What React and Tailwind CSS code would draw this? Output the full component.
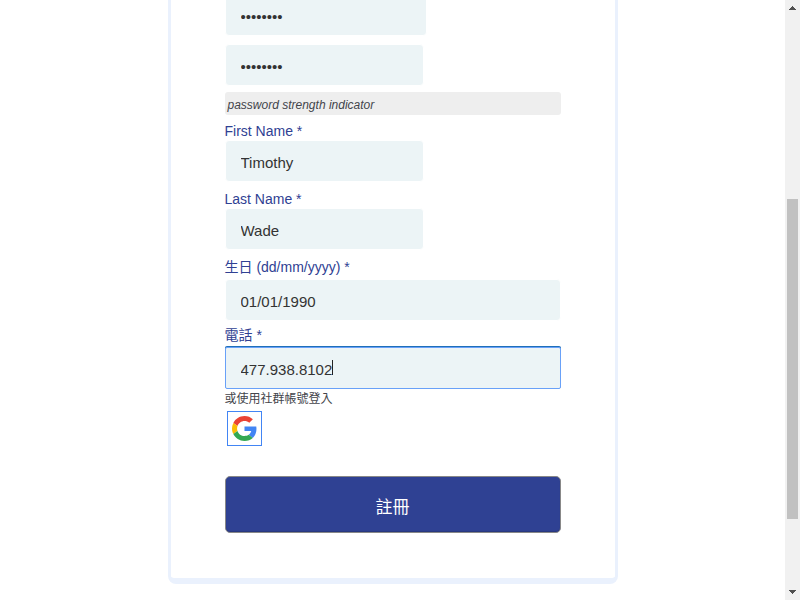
const fieldBase =
  "block h-[42px] rounded-[4px] border border-white bg-[#ecf4f6] px-[15px] pt-[2px] text-[15px] text-[#333333] outline-none";
const labelBase = "block h-[18px] text-sm leading-[18px] text-[#2f4193]";

function GoogleLogo() {
  return (
    <svg viewBox="0 0 48 48" className="size-[25px]" aria-hidden="true">
      <path fill="#EA4335" d="M24 9.5c3.54 0 6.71 1.22 9.21 3.6l6.85-6.85C35.9 2.38 30.47 0 24 0 14.62 0 6.51 5.38 2.56 13.22l7.98 6.19C12.43 13.72 17.74 9.5 24 9.5z" />
      <path fill="#4285F4" d="M46.98 24.55c0-1.57-.15-3.09-.38-4.55H24v9.02h12.94c-.58 2.96-2.26 5.48-4.78 7.18l7.73 6c4.51-4.18 7.09-10.36 7.09-17.65z" />
      <path fill="#FBBC05" d="M10.53 28.59c-.48-1.45-.76-2.99-.76-4.59s.27-3.14.76-4.59l-7.98-6.19C.92 16.46 0 20.12 0 24c0 3.88.92 7.54 2.56 10.78l7.97-6.19z" />
      <path fill="#34A853" d="M24 48c6.48 0 11.93-2.13 15.89-5.81l-7.73-6c-2.15 1.45-4.92 2.3-8.16 2.3-6.26 0-11.57-4.22-13.47-9.91l-7.98 6.19C6.51 42.62 14.62 48 24 48z" />
    </svg>
  );
}

function Scrollbar() {
  return (
    <div className="flex w-[15px] shrink-0 flex-col items-center justify-between bg-[#f1f1f1]" aria-hidden="true">
      <svg viewBox="0 0 15 15" className="size-[15px]" shapeRendering="crispEdges">
        <path d="M4 10h7v-1h-1v-1h-1v-1h-1v-1h-1v1h-1v1h-1v1h-1z" fill="#505050" />
      </svg>
      <div className="flex w-[11px] flex-1 flex-col">
        <div className="grow-[184]" />
        <div className="grow-[320] bg-[#c1c1c1]" />
        <div className="grow-[66]" />
      </div>
      <svg viewBox="0 0 15 15" className="size-[15px]" shapeRendering="crispEdges">
        <path d="M4 5h7v1h-1v1h-1v1h-1v1h-1v-1h-1v-1h-1v-1h-1z" fill="#505050" />
      </svg>
    </div>
  );
}

export default function App() {
  return (
    <div className="flex h-screen overflow-hidden bg-white font-['Liberation_Sans','Noto_Sans_CJK_TC',sans-serif]">
      <main className="min-w-0 flex-1 overflow-hidden">
        <form
          className="mx-auto -mt-[6px] w-full max-w-[450px] rounded-b-lg border-x-[3px] border-b-[6px] border-[#eaf1fd] px-[54px] pb-[45px]"
          onSubmit={(e) => e.preventDefault()}
        >
          <input type="password" aria-label="Password" defaultValue="password" className={`${fieldBase} w-[202px]`} />
          <input type="password" aria-label="Confirm password" defaultValue="password" className={`${fieldBase} mt-2 w-[199px]`} />
          <div className="mt-[6px] h-[23px] rounded-[3px] bg-[#eeeeee] px-[3px] pt-[2px] text-xs leading-[23px] text-[#43454b] italic">
            password strength indicator
          </div>

          <label htmlFor="first" className={`${labelBase} mt-[7px]`}>First Name *</label>
          <input id="first" type="text" defaultValue="Timothy" className={`${fieldBase} w-[199px]`} />

          <label htmlFor="last" className={`${labelBase} mt-2`}>Last Name *</label>
          <input id="last" type="text" defaultValue="Wade" className={`${fieldBase} w-[199px]`} />

          <label htmlFor="birthday" className={`${labelBase} mt-2 mb-[3px]`}>生日 (dd/mm/yyyy) *</label>
          <input id="birthday" type="text" defaultValue="01/01/1990" className={`${fieldBase} w-full`} />

          <label htmlFor="phone" className={`${labelBase} mt-[5px] mb-[3px]`}>電話 *</label>
          <div className="relative">
            <input
              id="phone"
              type="tel"
              defaultValue="477.938.8102"
              className="block h-[42px] w-full rounded-[2px] border border-[#69a1f8] bg-[#ecf4f6] px-[15px] pt-[2px] text-[15px] text-[#333333] shadow-[0_-1px_0_#1f6fb8] outline-none"
            />
            <span className="absolute top-[13px] left-[107px] h-[15px] w-px bg-[#222222]" aria-hidden="true" />
          </div>

          <p className="text-xs leading-[20px] text-[#43454b]">或使用社群帳號登入</p>
          <button
            type="button"
            aria-label="Google"
            className="mt-[2px] ml-[2px] flex size-[35px] items-center justify-center border border-[#4285f4] bg-white"
          >
            <GoogleLogo />
          </button>

          <button
            type="submit"
            className="mt-[30px] block h-[57px] w-full rounded-[5px] border border-[#888888] bg-[#2f4193] pt-[6px] text-[17px] text-white shadow-[inset_0_-1px_1px_rgba(0,0,0,0.15)]"
          >
            註冊
          </button>
        </form>
      </main>
      <Scrollbar />
    </div>
  );
}
